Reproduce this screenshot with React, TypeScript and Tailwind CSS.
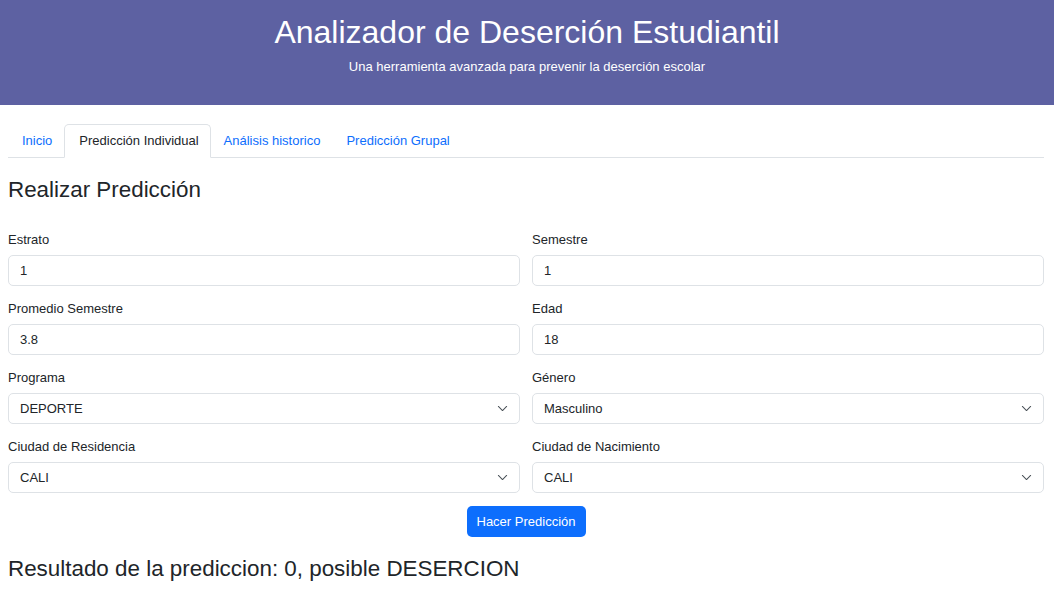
import React from "react";

const Chevron = () => (
  <svg width="11" height="11" viewBox="0 0 16 16" fill="none" stroke="#495057" strokeWidth="1.5" strokeLinecap="round" strokeLinejoin="round">
    <path d="M2 5l6 6 6-6" />
  </svg>
);

function Field({ label, value, select }: { label: string; value: string; select?: boolean }) {
  return (
    <div className="flex flex-col">
      <label className="text-[13px] text-[#212529] leading-[20px] mb-[5px]">{label}</label>
      <div className="h-[31px] rounded-[5px] border border-[#dee2e6] bg-white pl-[11px] pr-[11px] flex items-center justify-between text-[13px] text-[#212529]">
        <span>{value}</span>
        {select && <span className="flex"><Chevron /></span>}
      </div>
    </div>
  );
}

export default function App() {
  return (
    <div className="min-h-[589px] bg-white" style={{ fontFamily: '"Liberation Sans", Arial, sans-serif' }}>
      <header className="h-[105px] bg-[#5d61a2] flex flex-col items-center pt-[12px] text-white">
        <h1 className="text-[32px] leading-[40px]">Analizador de Deserción Estudiantil</h1>
        <p className="text-[13px] mt-[6px] leading-[18px]">Una herramienta avanzada para prevenir la deserción escolar</p>
      </header>
      <div className="pl-[8px] pr-[10px] pt-[19px]">
        <nav className="flex border-b border-[#dee2e6] h-[34px] text-[13px]">
          <span className="pl-[14px] pr-[12px] flex items-center text-[#0d6efd]">Inicio</span>
          <span className="pl-[14px] pr-[11px] flex items-center text-[#212529] border border-[#dee2e6] border-b-white rounded-t-[5px] -mb-px bg-white">Predicción Individual</span>
          <span className="px-[13px] flex items-center text-[#0d6efd]">Análisis historico</span>
          <span className="px-[13px] flex items-center text-[#0d6efd]">Predicción Grupal</span>
        </nav>
        <h2 className="text-[22.4px] text-[#212529] mt-[18px] leading-[28px]">Realizar Predicción</h2>
        <div className="grid grid-cols-2 gap-x-[12px] gap-y-[13px] mt-[26px]">
          <Field label="Estrato" value="1" />
          <Field label="Semestre" value="1" />
          <Field label="Promedio Semestre" value="3.8" />
          <Field label="Edad" value="18" />
          <Field label="Programa" value="DEPORTE" select />
          <Field label="Género" value="Masculino" select />
          <Field label="Ciudad de Residencia" value="CALI" select />
          <Field label="Ciudad de Nacimiento" value="CALI" select />
        </div>
        <div className="flex justify-center mt-[13px]">
          <button className="h-[31px] px-[10px] rounded-[5px] bg-[#0d6efd] text-white text-[13px]">Hacer Predicción</button>
        </div>
        <h3 className="text-[22.4px] text-[#212529] mt-[18px] leading-[28px]">Resultado de la prediccion: 0, posible DESERCION</h3>
      </div>
    </div>
  );
}
